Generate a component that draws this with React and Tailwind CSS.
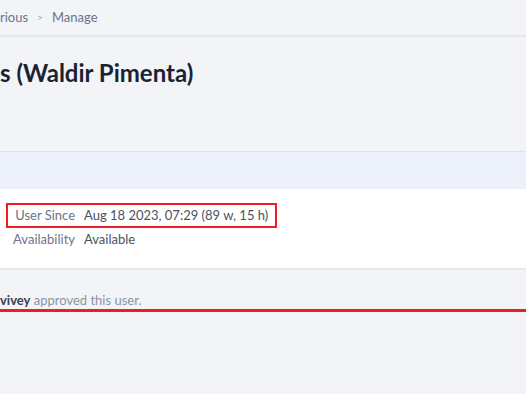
import React from 'react';

export default function App() {
  return (
    <div className="w-[526px] h-[394px] overflow-hidden bg-[#f2f4f7] font-['Lato','Liberation_Sans',sans-serif]">
      {/* Breadcrumb bar */}
      <div className="h-9 flex items-center gap-[9px] text-[13px] text-[#6b7488] border-b border-[#e1e5eb] shadow-[0_1px_2px_rgba(0,0,0,0.05)]">
        <span>rious</span>
        <span className="text-[10px] text-[#9aa1b0]">&gt;</span>
        <span>Manage</span>
      </div>

      {/* Title */}
      <h1 className="mt-[23px] h-[28px] leading-[28px] text-[24px] font-bold text-[#1b2333]">
        s (Waldir Pimenta)
      </h1>

      {/* Details panel */}
      <div className="mt-[64px] border-t border-[#dce2ec]">
        <div className="h-[37px] bg-[#ebf0fa]"></div>
        <div className="bg-white pt-[14px] pb-[17px] pl-[6px] text-[13px] border-b-2 border-[#e4e8ee]">
          <div className="flex items-center w-[271px] h-[25px] border-2 border-[#ee1c25]">
            <span className="w-[67px] text-right text-[#6b7488]">User Since</span>
            <span className="ml-[9px] text-[#4a5263]">Aug 18 2023, 07:29 (89 w, 15 h)</span>
          </div>
          <div className="flex items-center h-[23px] px-[2px]">
            <span className="w-[67px] text-right text-[#6b7488]">Availability</span>
            <span className="ml-[9px] text-[#4a5263]">Available</span>
          </div>
        </div>
      </div>

      {/* Timeline note */}
      <div className="mt-[22px] h-[17px] leading-[17px] text-[13px] text-[#8c93a3]">
        <span className="font-bold text-[#3a4150]">vivey</span> approved this user.
      </div>
      <div className="h-[3px] bg-[#ee1c25]"></div>
    </div>
  );
}
